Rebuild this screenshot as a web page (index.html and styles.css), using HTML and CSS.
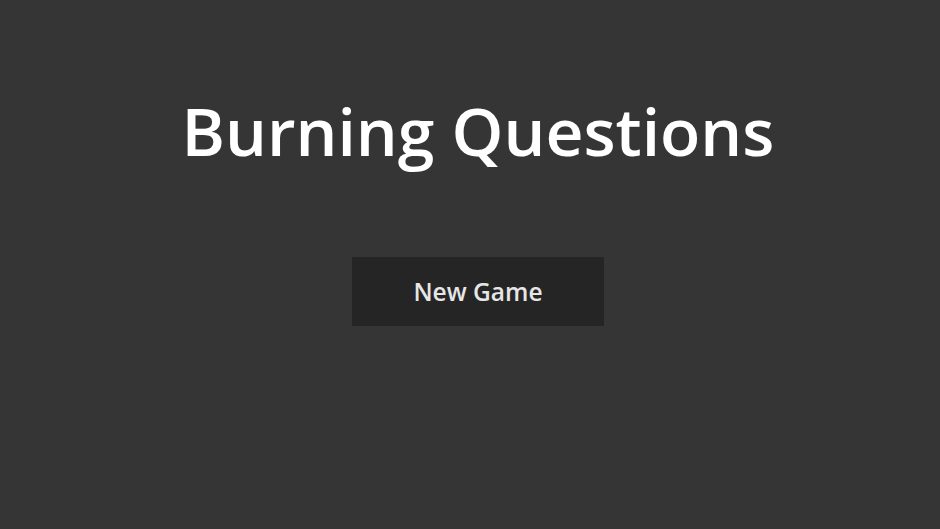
FILE: index.html
```html
<!DOCTYPE html>
<html>
<head>
<meta charset="utf-8">
<link rel="stylesheet" href="styles.css">
</head>
<body>
<main class="screen">
  <h1 class="title">Burning Questions</h1>
  <button class="btn">New Game</button>
</main>
</body>
</html>
```
FILE: styles.css
```css
html, body {
  margin: 0;
  height: 100%;
  background: #353535;
}
.screen {
  box-sizing: border-box;
  height: 100%;
  padding-left: 16px;
  display: flex;
  flex-direction: column;
  align-items: center;
  font-family: "Open Sans", "Noto Sans", sans-serif;
}
.title {
  margin: 80px 0 0;
  font-size: 66px;
  font-weight: 600;
  line-height: 100px;
  color: #ffffff;
}
.btn {
  margin-top: 77px;
  width: 252px;
  height: 69px;
  border: none;
  background: #252525;
  color: #e6e6e6;
  font-family: inherit;
  font-size: 24.5px;
  font-weight: 600;
  padding: 0;
}
```
